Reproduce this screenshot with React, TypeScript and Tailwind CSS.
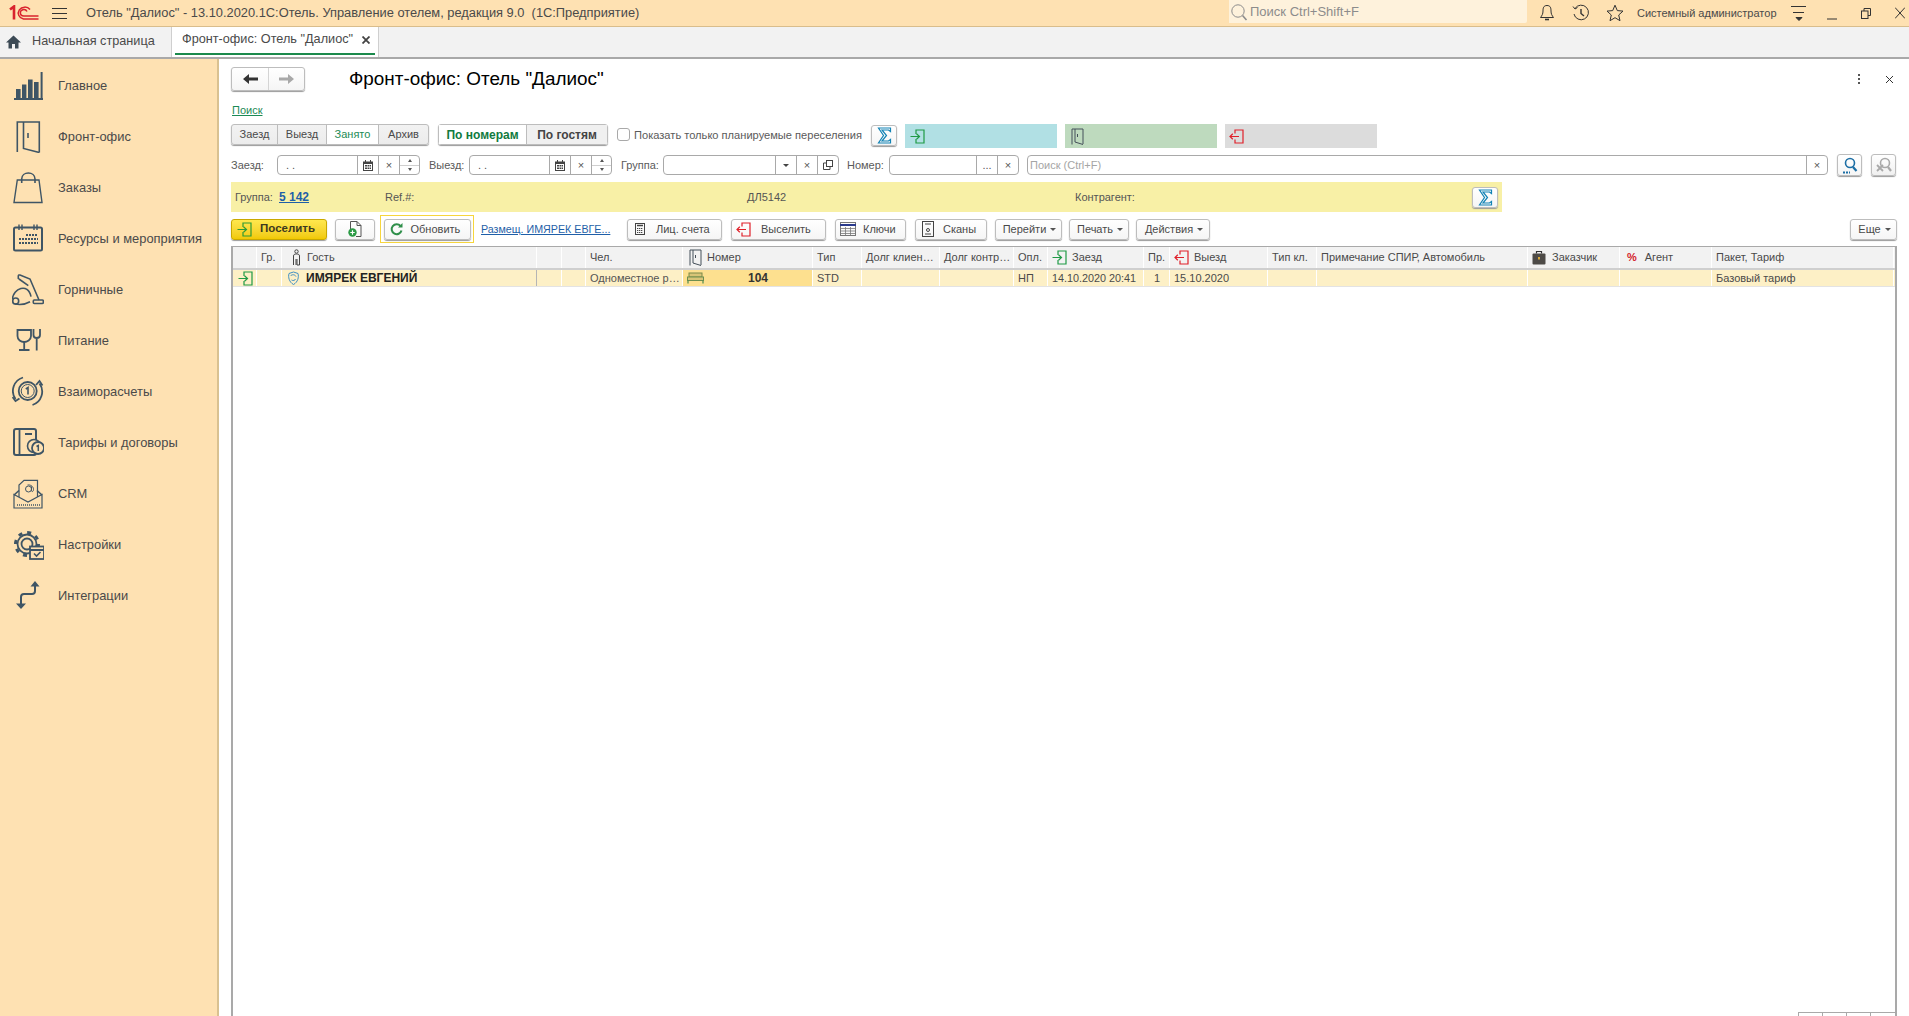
import type { ReactNode } from "react";

const Logo = () => (
  <svg width="30" height="16" viewBox="0 0 30 16" fill="none" stroke="#d9232e">
    <path d="M1 4.5 L5 1.5 V14.5" strokeWidth="2.6" />
    <path d="M21 4.5 A6.5 6 0 1 0 14.5 14 H29.5" strokeWidth="1.5" />
    <path d="M18 6.5 A3.5 3.2 0 1 0 15 11 H29.5" strokeWidth="1.5" />
  </svg>
);

const EnterIcon = ({ color = "#1f9a45" }: { color?: string }) => (
  <svg width="15" height="15" viewBox="0 0 15 15" fill="none" stroke={color} strokeWidth="1.2">
    <path d="M6 5 V1 H14 V14 H6 V10" />
    <path d="M0.5 7.5 H9.5 M6.5 4.8 L9.5 7.5 L6.5 10.2" />
  </svg>
);

const ExitIcon = () => (
  <svg width="15" height="15" viewBox="0 0 15 15" fill="none" stroke="#e0202a" strokeWidth="1.2">
    <path d="M6 4.5 V1 H14 V14 H6 V10.5" />
    <path d="M10 7.5 H1 M3.8 4.8 L1 7.5 L3.8 10.2" />
  </svg>
);

const DoorSmall = () => (
  <svg width="13" height="17" viewBox="0 0 13 17" fill="none" stroke="#45505a" strokeWidth="1">
    <path d="M1 16.5 V1 H12 V16" />
    <path d="M4 1 V14 L12 16.5" />
    <path d="M6.5 6 V9" />
  </svg>
);

const Sigma = () => (
  <svg width="15" height="17" viewBox="0 0 15 17" fill="none" stroke="#1283b5" strokeWidth="1.2">
    <path d="M1.5 1 H13.5 V4.5 L11.5 3 H5 L9.5 8.5 L5 14 H11.5 L13.5 12.5 V16 H1.5 L6.5 8.5 Z" />
  </svg>
);

const navIcons: ReactNode[] = [
  <>
    <g fill="#3f5565" stroke="none">
      <rect x="4" y="19" width="4.6" height="9" />
      <rect x="10" y="14.5" width="4.4" height="13.5" />
      <rect x="16" y="9.5" width="4.6" height="18.5" />
      <rect x="22" y="12" width="4.6" height="16" />
      <rect x="2" y="28" width="29" height="2" />
      <rect x="28.6" y="2" width="2" height="27" />
    </g>
  </>,
  <>
    <path d="M5.3 31 V1 H27.3 V31.5" />
    <path d="M11.5 1 V27.5 L27.3 31.5" />
    <path d="M16 12 V17" />
  </>,
  <>
    <path d="M5.3 8 H27 L30 30.5 H2 Z" strokeWidth="1.4" />
    <path d="M9.7 11 V7 C9.7 -1 23 -1 23 7 V11" />
  </>,
  <>
    <rect x="2" y="4.5" width="28" height="23" rx="1.5" strokeWidth="2" />
    <path d="M7 1.5 V7 M10 1.5 V7 M22 1.5 V7 M25 1.5 V7" strokeWidth="1.4" />
    <path d="M14 12 H26" strokeWidth="2.2" strokeDasharray="2 1" />
    <path d="M7 16 H26" strokeWidth="2.2" strokeDasharray="2 1" />
    <path d="M7 20 H26" strokeWidth="2.2" strokeDasharray="2 1" />
  </>,
  <>
    <path d="M7 5 L6.3 4.3 V2 C6.3 1 7.2 .8 8 1 L18 5 L27 26" />
    <path d="M7 5 L16.3 11.7" />
    <path d="M0.5 25 C1 15 16 8 19 22.7 M3 30 C8 31 14 30 18 27.7" />
    <circle cx="3.7" cy="27" r="3" />
    <rect x="21.3" y="26" width="10" height="3.5" rx="1" />
  </>,
  <>
    <path d="M5.5 5 H19 V11 C19 15 15 17 12.2 17 C9 17 5.5 15 5.5 11 Z" strokeWidth="1.8" />
    <path d="M12.2 17 V24.5 M7 25 H17.5" strokeWidth="1.8" />
    <path d="M21.5 4 V10 C21.5 12 23 13 24.7 13 C26.5 13 28 12 28 10 V4 M24.7 13 V25.5" strokeWidth="1.8" />
  </>,
  <>
    <circle cx="15.7" cy="15" r="9" strokeWidth="1.8" />
    <circle cx="15.7" cy="15" r="6.5" strokeWidth="1" />
    <path d="M13.8 13 L16 11.5 V18.5" strokeWidth="1.6" />
    <path d="M11 1.5 A14 14 0 0 0 3.5 23 M20.5 29 A14 14 0 0 0 27.5 7.5" strokeWidth="1.8" />
    <path d="M0.5 21 L3.5 25 L7.5 22.5 M24 9 L27.5 5 L30.5 9.5" strokeWidth="1.8" />
  </>,
  <>
    <rect x="2" y="2" width="22" height="26" rx="2" strokeWidth="2" />
    <path d="M7.5 2 V28 M13 7 H20" strokeWidth="1.8" />
    <circle cx="22" cy="19" r="6.5" fill="#fee1b2" strokeWidth="1.6" />
    <circle cx="26" cy="21" r="6" fill="#fee1b2" strokeWidth="1.8" />
    <path d="M24.5 19.5 L26.3 18.5 V24" strokeWidth="1.5" />
  </>,
  <>
    <path d="M2 17 L7 12.5 M30 17 L25 12.5" />
    <path d="M2 16.5 V30 H30 V16.5 L16 24 Z" strokeWidth="1.2" />
    <path d="M7 19 V7 L12 2.3 H25.5 V19" strokeWidth="1.2" />
    <path d="M5 27 H28" strokeDasharray="1 1" strokeWidth="1.3" />
    <circle cx="16.5" cy="11" r="3" strokeWidth="1" />
    <path d="M19.5 8.5 V12.5 C19.5 14 21.5 14 21.5 11.5 C21.5 8 18 6.5 15.5 7" strokeWidth="1" />
  </>,
  <>
    <circle cx="15" cy="15" r="5.5" strokeWidth="1.8" />
    <circle cx="15" cy="15" r="9.5" strokeWidth="1.8" />
    <circle cx="15" cy="15" r="11.5" strokeWidth="3" strokeDasharray="4 5" />
    <rect x="18" y="17.5" width="14" height="12.5" fill="#fee1b2" strokeWidth="1.8" />
    <path d="M18 21 H32" strokeWidth="2" />
    <path d="M22 24.5 L24.5 27 L28.5 23" strokeWidth="1.6" />
  </>,
  <>
    <path d="M23 5 V11 A3 3 0 0 1 20 14 H12 A3 3 0 0 0 9 17 V25" strokeWidth="2" />
    <path d="M23 1 L27.5 6.5 H18.5 Z M9 29 L4 23.5 H14 Z" fill="#3f5565" stroke="none" />
  </>,
];

const navLabels = [
  "Главное",
  "Фронт-офис",
  "Заказы",
  "Ресурсы и мероприятия",
  "Горничные",
  "Питание",
  "Взаиморасчеты",
  "Тарифы и договоры",
  "CRM",
  "Настройки",
  "Интеграции",
];

const TopBar = () => (
  <div className="flex h-[27px] shrink-0 items-center border-b border-[#d9bd8c] bg-[#fee1b2] text-[#4a4a4a]">
    <div className="ml-[9px] w-[30px]">
      <Logo />
    </div>
    <div className="ml-[13px] flex w-[15px] flex-col gap-[4px]">
      <div className="h-[1px] bg-[#333]" />
      <div className="h-[1px] bg-[#333]" />
      <div className="h-[1px] bg-[#333]" />
    </div>
    <div className="ml-[19px] whitespace-pre text-[12.85px]">
      Отель "Далиос" - 13.10.2020.1С:Отель. Управление отелем, редакция 9.0  (1С:Предприятие)
    </div>
    <div className="ml-auto flex h-[23px] w-[298px] items-center self-start rounded-br-[2px] bg-[#fef2dc] pl-[1px] text-[13px] text-[#8c8c8c]">
      <svg width="18" height="18" viewBox="0 0 18 18" fill="none" stroke="#8c8c8c" strokeWidth="1">
        <circle cx="8" cy="8" r="6.2" />
        <path d="M12.5 12.5 L16.5 17" strokeWidth="1.6" />
      </svg>
      <span className="ml-[2px]">Поиск Ctrl+Shift+F</span>
    </div>
    <svg className="ml-[12px]" width="16" height="18" viewBox="0 0 16 18" fill="none" stroke="#333" strokeWidth="1">
      <path d="M8 1.5 C4.5 1.5 4 4 4 7 C4 10 3 11.5 1.5 13.5 H14.5 C13 11.5 12 10 12 7 C12 4 11.5 1.5 8 1.5 Z" />
      <path d="M6 15.5 H10" strokeWidth="1.6" />
    </svg>
    <svg className="ml-[17px]" width="18" height="18" viewBox="0 0 18 18" fill="none" stroke="#333" strokeWidth="1">
      <path d="M3 4.5 A7.3 7.3 0 1 1 2 10" />
      <path d="M1 2.5 L3 5 L5.5 3.5" />
      <path d="M9 5 V9.5 L12 12" strokeWidth="1.4" />
    </svg>
    <svg className="ml-[16px]" width="18" height="18" viewBox="0 0 18 18" fill="none" stroke="#333" strokeWidth="1">
      <path d="M9 1.2 L11.3 6.6 L17 7.1 L12.7 11 L14 16.7 L9 13.7 L4 16.7 L5.3 11 L1 7.1 L6.7 6.6 Z" />
    </svg>
    <div className="ml-[13px] w-[143px] whitespace-nowrap text-[11px]">Системный администратор</div>
    <svg className="ml-[11px]" width="16" height="16" viewBox="0 0 16 16" fill="none" stroke="#333" strokeWidth="1">
      <path d="M0 1.5 H15 M2 7.5 H13" />
      <path d="M5 12.5 H11 L8 15.5 Z" fill="#333" />
    </svg>
    <svg className="ml-[20px]" width="10" height="14" viewBox="0 0 10 14" fill="none" stroke="#333" strokeWidth="1">
      <path d="M0 13 H10" />
    </svg>
    <svg className="ml-[24px]" width="10" height="11" viewBox="0 0 10 11" fill="none" stroke="#333" strokeWidth="1">
      <path d="M3 3 V0.5 H9.5 V7.5 H7" />
      <rect x="0.5" y="3" width="6.5" height="7.5" />
    </svg>
    <svg className="ml-[24px] mr-[4px]" width="10" height="12" viewBox="0 0 10 12" fill="none" stroke="#333" strokeWidth="1">
      <path d="M0 0.5 L10 11.5 M10 0.5 L0 11.5" />
    </svg>
  </div>
);

const TabBar = () => (
  <div className="flex h-[32px] shrink-0 border-b-2 border-[#a9a9a9] bg-[#f2f2f2] text-[12.7px] text-[#4a4a4a]">
    <div className="flex w-[172px] items-center border-r border-[#cfcfcf] pl-[6px]">
      <svg width="15" height="14" viewBox="0 0 15 14" fill="#3c4a55">
        <path d="M7.5 0.5 L15 7.5 H12.5 V13.5 H9 V9 H6 V13.5 H2.5 V7.5 H0 Z" />
      </svg>
      <span className="ml-[11px]">Начальная страница</span>
    </div>
    <div className="flex w-[207px] flex-col border-r border-[#cfcfcf] bg-white">
      <div className="flex flex-1 items-center pl-[10px]">
        <span className="w-[180px] whitespace-nowrap">Фронт-офис: Отель "Далиос"</span>
        <svg width="8" height="8" viewBox="0 0 8 8" stroke="#444" strokeWidth="1.8">
          <path d="M0.5 0.5 L7.5 7.5 M7.5 0.5 L0.5 7.5" />
        </svg>
      </div>
      <div className="mx-[3px] mb-[2px] h-[2px] bg-[#1b8a4c]" />
    </div>
  </div>
);

const Sidebar = () => (
  <aside className="flex w-[219px] shrink-0 flex-col border-r-2 border-[#d9c191] bg-[#fee1b2] pt-[1px] text-[12.9px] text-[#4a4a4a]">
    {navLabels.map((label, i) => (
      <div key={label} className="flex h-[51px] shrink-0 items-center pl-[12px]">
        <svg width="32" height="32" viewBox="0 0 32 32" fill="none" stroke="#3f5565" strokeWidth="1.6" className="shrink-0">
          {navIcons[i]}
        </svg>
        <span className="ml-[14px] whitespace-nowrap">{label}</span>
      </div>
    ))}
  </aside>
);

const btn =
  "flex items-center justify-center rounded-[3px] border border-[#bdbdbd] bg-linear-to-b from-white to-[#f5f5f5] shadow-[0_1px_1px_#9a9a9a] text-[11px] text-[#4a4a4a]";

const SigmaButton = () => (
  <div className={`${btn} h-[21px] w-[26px]`}>
    <Sigma />
  </div>
);

const Seg = ({ w, className = "", children }: { w: string; className?: string; children?: ReactNode }) => (
  <div className={`flex h-full items-center justify-center border-l border-[#a9a9a9] text-[#555] ${w} ${className}`}>
    {children}
  </div>
);

const XGlyph = () => <span className="text-[11px] leading-none">×</span>;

const CalIcon = () => (
  <svg width="10" height="11" viewBox="0 0 10 11" fill="#444">
    <path d="M0 1.5 H2 V0 H3 V1.5 H7 V0 H8 V1.5 H10 V11 H0 Z M1 4 V10 H9 V4 Z" />
    <path d="M2 5 H4 V6.5 H2 Z M4.5 5 H6 V6.5 H4.5 Z M6.5 5 H8 V6.5 H6.5 Z M2 7.5 H4 V9 H2 Z M4.5 7.5 H6 V9 H4.5 Z M6.5 7.5 H8 V9 H6.5 Z" />
  </svg>
);

const Spin = () => (
  <div className="flex h-full flex-col">
    <div className="flex flex-1 items-center justify-center border-b border-[#cfcfcf]">
      <div className="h-0 w-0 border-x-[2px] border-b-[3px] border-x-transparent border-b-[#555]" />
    </div>
    <div className="flex flex-1 items-center justify-center">
      <div className="h-0 w-0 border-x-[2px] border-t-[3px] border-x-transparent border-t-[#555]" />
    </div>
  </div>
);

const fieldCls = "flex h-[20px] items-center overflow-hidden rounded-[4px] border border-[#a9a9a9] bg-white";
const labelCls = "text-[11px] text-[#5a5a5a] whitespace-nowrap";

const DateField = () => (
  <div className={`${fieldCls} w-[143px]`}>
    <div className="flex-1 pl-[8px] text-[11px] text-[#555]">. .</div>
    <Seg w="w-[21px]">
      <CalIcon />
    </Seg>
    <Seg w="w-[21px]">
      <XGlyph />
    </Seg>
    <Seg w="w-[20px] !block">
      <Spin />
    </Seg>
  </div>
);

const Caret = () => <div className="ml-[4px] h-0 w-0 border-x-[3px] border-t-[3px] border-x-transparent border-t-[#555]" />;

const MenuBtn = ({ w, label, className = "" }: { w: string; label: string; className?: string }) => (
  <div className={`${btn} h-[21px] ${w} pl-[2px] ${className}`}>
    {label}
    <Caret />
  </div>
);

const columns = "grid grid-cols-[24px_25px_255px_25px_24px_97px_130px_49px_78px_74px_34px_96px_26px_98px_49px_211px_92px_92px_182px]";

const PersonIcon = () => (
  <svg width="9" height="17" viewBox="0 0 9 17" fill="none" stroke="#444" strokeWidth="1">
    <circle cx="4.5" cy="2.5" r="1.7" />
    <path d="M1.5 16 V7 C1.5 5.5 2.5 5 4.5 5 C6.5 5 7.5 5.5 7.5 7 V16 H5 V10 M4 10 V16" />
  </svg>
);

const CaseIcon = () => (
  <svg width="14" height="15" viewBox="0 0 14 15">
    <path d="M4.5 3.5 V1.5 H9.5 V3.5" fill="none" stroke="#333" strokeWidth="1.2" />
    <rect x="0.5" y="3.5" width="13" height="11" rx="1" fill="#4d4a46" />
    <rect x="6" y="7" width="2" height="2.5" fill="#d9a93a" />
  </svg>
);

const Head = ({ children, className = "" }: { children?: ReactNode; className?: string }) => (
  <div className={`flex h-[21px] items-center gap-[5px] overflow-hidden whitespace-nowrap border-r border-white pb-[1px] pl-[4px] ${className}`}>
    {children}
  </div>
);

const headers: ReactNode[] = [
  "",
  "Гр.",
  <>
    <span className="ml-[6px] flex">
      <PersonIcon />
    </span>
    <span className="ml-[1px]">Гость</span>
  </>,
  "",
  "",
  "Чел.",
  <>
    <span className="ml-[2px] flex">
      <DoorSmall />
    </span>
    <span>Номер</span>
  </>,
  "Тип",
  "Долг клиен…",
  "Долг контр…",
  "Опл.",
  <>
    <EnterIcon />
    <span>Заезд</span>
  </>,
  "Пр.",
  <>
    <ExitIcon />
    <span>Выезд</span>
  </>,
  "Тип кл.",
  "Примечание СПИР, Автомобиль",
  <>
    <CaseIcon />
    <span className="ml-[1px]">Заказчик</span>
  </>,
  <>
    <span className="ml-[3px] font-bold text-[#d4232a]">%</span>
    <span className="ml-[3px]">Агент</span>
  </>,
  "Пакет, Тариф",
];

const GuestIcon = () => (
  <svg width="13" height="14" viewBox="0 0 13 14" fill="none" stroke="#3f8fc4" strokeWidth="1">
    <path d="M6.5 1 L11 2.5 C12 6 11 11 6.5 13.5 C2 11 1 6 2 2.5 Z" />
    <path d="M3.5 5 C5 3 8 3.5 9 5.5 M4.5 9 C6 10 8 9.5 8.5 8" />
  </svg>
);

const BedIcon = () => (
  <svg width="17" height="12" viewBox="0 0 17 12">
    <rect x="2" y="1" width="13" height="4" fill="#d8c477" stroke="#7d8a4a" strokeWidth="1" />
    <rect x="0.5" y="5" width="16" height="3.5" fill="#d8c477" stroke="#6e8f4f" strokeWidth="1" />
    <path d="M1 8.5 V11.5 M16 8.5 V11.5" stroke="#4f8a4f" strokeWidth="1.2" />
  </svg>
);

const Cell = ({ children, className = "" }: { children?: ReactNode; className?: string }) => (
  <div className={`flex h-[16px] items-center overflow-hidden whitespace-nowrap border-r border-white pl-[4px] ${className}`}>
    {children}
  </div>
);

const App = () => (
  <div className="flex h-[1016px] w-[1909px] flex-col overflow-hidden bg-white text-[#4a4a4a] [font-family:'Liberation_Sans',Arial,sans-serif]">
    <TopBar />
    <TabBar />
    <div className="flex min-h-0 flex-1">
      <Sidebar />
      <main className="flex min-w-0 flex-1 flex-col px-[12px]">
        <div className="mt-[8px] flex h-[24px] shrink-0 items-center">
          <div className={`${btn} h-[24px] w-[74px] !justify-start`}>
            <div className="flex h-full w-[37px] items-center justify-center border-r border-[#d4d4d4]">
              <svg width="15" height="10" viewBox="0 0 15 10" fill="#333">
                <path d="M0 5 L6 0 V3.4 H15 V6.6 H6 V10 Z" />
              </svg>
            </div>
            <div className="flex flex-1 items-center justify-center">
              <svg width="15" height="10" viewBox="0 0 15 10" fill="#a8a8a8">
                <path d="M15 5 L9 0 V3.4 H0 V6.6 H9 V10 Z" />
              </svg>
            </div>
          </div>
          <div className="ml-[44px] whitespace-nowrap pt-[1px] text-[18.9px] text-black">Фронт-офис: Отель "Далиос"</div>
          <div className="ml-auto flex w-[28px] flex-col gap-[2px] pl-[1px]">
            <div className="h-[2px] w-[2px] bg-[#555]" />
            <div className="h-[2px] w-[2px] bg-[#555]" />
            <div className="h-[2px] w-[2px] bg-[#555]" />
          </div>
          <svg className="mr-[3px]" width="9" height="9" viewBox="0 0 9 9" stroke="#333" strokeWidth="1">
            <path d="M1 1 L8 8 M8 1 L1 8" />
          </svg>
        </div>

        <div className="mt-[12px] h-[14px] shrink-0 pl-[1px] text-[11px] leading-[14px] text-[#1c8a55] underline">Поиск</div>

        <div className="mt-[7px] flex h-[24px] shrink-0 items-start">
          <div className={`${btn} h-[21px] w-[198px] !justify-start !from-[#f2f2f2] !to-[#ececec]`}>
            <div className="flex h-full w-[46px] items-center justify-center border-r border-[#bdbdbd]">Заезд</div>
            <div className="flex h-full w-[49px] items-center justify-center border-r border-[#bdbdbd]">Выезд</div>
            <div className="flex h-full w-[52px] items-center justify-center border-r border-[#bdbdbd] bg-white text-[#1c8a55]">Занято</div>
            <div className="flex h-full flex-1 items-center justify-center">Архив</div>
          </div>
          <div className={`${btn} ml-[9px] h-[21px] w-[170px] !justify-start !text-[12px] font-bold`}>
            <div className="flex h-full w-[88px] items-center justify-center border-r border-[#bdbdbd] bg-white text-[#127a3e]">По номерам</div>
            <div className="flex h-full flex-1 items-center justify-center bg-[#f0f0f0] text-[#444]">По гостям</div>
          </div>
          <div className="ml-[9px] mt-[4px] h-[13px] w-[13px] shrink-0 rounded-[3px] border border-[#a9a9a9] bg-white" />
          <div className={`${labelCls} ml-[4px] mt-[3px] w-[237px] !text-[11.1px]`}>Показать только планируемые переселения</div>
          <div className="mt-[1px]">
            <SigmaButton />
          </div>
          <div className="ml-[8px] flex h-[24px] w-[152px] items-center bg-[#b1e0e4] pl-[5px]">
            <EnterIcon />
          </div>
          <div className="ml-[8px] flex h-[24px] w-[152px] items-center bg-[#bedabe] pl-[6px]">
            <DoorSmall />
          </div>
          <div className="ml-[8px] flex h-[24px] w-[152px] items-center bg-[#dcdcdc] pl-[4px]">
            <ExitIcon />
          </div>
        </div>

        <div className="mt-[6px] flex h-[22px] shrink-0 items-center">
          <div className={`${labelCls} w-[46px]`}>Заезд:</div>
          <DateField />
          <div className={`${labelCls} ml-[9px] w-[40px]`}>Выезд:</div>
          <DateField />
          <div className={`${labelCls} ml-[9px] w-[42px]`}>Группа:</div>
          <div className={`${fieldCls} w-[176px]`}>
            <div className="flex-1" />
            <Seg w="w-[21px]">
              <div className="h-0 w-0 border-x-[3px] border-t-[3px] border-x-transparent border-t-[#444]" />
            </Seg>
            <Seg w="w-[21px]">
              <XGlyph />
            </Seg>
            <Seg w="w-[21px]">
              <svg width="10" height="10" viewBox="0 0 10 10" fill="none" stroke="#444" strokeWidth="1">
                <rect x="3.5" y="0.5" width="6" height="6" />
                <path d="M3.5 3 H0.5 V9.5 H7 V6.5" />
              </svg>
            </Seg>
          </div>
          <div className={`${labelCls} ml-[8px] w-[42px]`}>Номер:</div>
          <div className={`${fieldCls} w-[130px]`}>
            <div className="flex-1" />
            <Seg w="w-[21px]">
              <span className="text-[11px] leading-none">...</span>
            </Seg>
            <Seg w="w-[21px]">
              <XGlyph />
            </Seg>
          </div>
          <div className={`${fieldCls} ml-[8px] w-[801px]`}>
            <div className="flex-1 pl-[2px] text-[11px] text-[#a5a5a5]">Поиск (Ctrl+F)</div>
            <Seg w="w-[21px]">
              <XGlyph />
            </Seg>
          </div>
          <div className={`${btn} ml-[9px] h-[22px] w-[25px]`}>
            <svg width="16" height="17" viewBox="0 0 16 17" fill="none" stroke="#1d6fa5" strokeWidth="1.6">
              <circle cx="8" cy="6" r="4.5" />
              <path d="M11 10 L14.5 14" strokeWidth="2.2" />
              <path d="M1 15.5 H8" strokeWidth="1.8" strokeDasharray="2 1" />
            </svg>
          </div>
          <div className={`${btn} ml-[9px] h-[22px] w-[25px] !to-[#f0f0f0]`}>
            <svg width="16" height="17" viewBox="0 0 16 17" fill="none" stroke="#a9a9a9" strokeWidth="1.6">
              <circle cx="9" cy="6" r="4.5" />
              <path d="M12 10 L15 14" strokeWidth="2.2" />
              <path d="M1 8 L7 14 M7 8 L1 14" strokeWidth="1.8" />
            </svg>
          </div>
        </div>

        <div className="mt-[6px] flex h-[30px] w-[1271px] shrink-0 items-center bg-[#f8f0a6] text-[11px] text-[#555]">
          <span className="ml-[4px] w-[44px]">Группа:</span>
          <span className="w-[106px] text-[12px] font-bold text-[#1f5fa8] underline">5 142</span>
          <span className="w-[362px]">Ref.#:</span>
          <span className="w-[328px]">ДЛ5142</span>
          <span className="flex-1">Контрагент:</span>
          <div className="mr-[4px]">
            <SigmaButton />
          </div>
        </div>

        <div className="mt-[3px] flex h-[28px] shrink-0 items-center">
          <div className="flex h-[21px] w-[96px] items-center rounded-[3px] border border-[#c9a800] bg-linear-to-b from-[#ffe84d] to-[#f1c900] pl-[5px] text-[11.5px] font-bold text-[#3d3a20] shadow-[0_1px_1px_#9a9a9a]">
            <EnterIcon color="#2f9a35" />
            <span className="ml-[8px]">Поселить</span>
          </div>
          <div className={`${btn} ml-[8px] h-[21px] w-[40px]`}>
            <svg width="14" height="16" viewBox="0 0 14 16" fill="none">
              <path d="M2.5 9 V0.5 H9 L13 4.5 V15.5 H8" stroke="#555" strokeWidth="1" />
              <path d="M9 0.5 V4.5 H13" stroke="#555" strokeWidth="1" />
              <circle cx="4.5" cy="11.5" r="4.2" fill="#2b9a45" />
              <path d="M2.3 11.5 H6.7 M4.5 9.3 V13.7" stroke="#fff" strokeWidth="1.2" />
            </svg>
          </div>
          <div className="ml-[5px] flex h-[28px] w-[94px] items-center justify-center border border-[#f6d53d]">
            <div className={`${btn} h-[21px] w-[87px] !justify-start gap-[8px] pl-[5px]`}>
              <svg width="13" height="13" viewBox="0 0 13 13" fill="none" stroke="#2f8f4a" strokeWidth="2">
                <path d="M10.5 3 A5 5 0 1 0 11.5 7.5" />
                <path d="M8 4.5 H12.5 V0 Z" strokeWidth="0" fill="#2f8f4a" />
              </svg>
              Обновить
            </div>
          </div>
          <div className="ml-[7px] w-[130px] whitespace-nowrap text-[10.7px] text-[#1f5fa8] underline">Размещ. ИМЯРЕК ЕВГЕ...</div>
          <div className={`${btn} ml-[16px] h-[21px] w-[95px] !justify-start gap-[11px] pl-[7px]`}>
            <svg width="10" height="12" viewBox="0 0 10 12" fill="none" stroke="#444" strokeWidth="1">
              <rect x="0.5" y="0.5" width="9" height="11" />
              <path d="M2 2.5 H8" strokeWidth="1.5" />
              <path d="M2 5.5 H8 M2 7.5 H8 M2 9.5 H8" strokeDasharray="1.2 .7" strokeWidth="1.2" />
            </svg>
            Лиц. счета
          </div>
          <div className={`${btn} ml-[9px] h-[21px] w-[95px] !justify-start gap-[10px] pl-[4px]`}>
            <ExitIcon />
            Выселить
          </div>
          <div className={`${btn} ml-[9px] h-[21px] w-[71px] !justify-start gap-[7px] pl-[4px]`}>
            <svg width="16" height="14" viewBox="0 0 16 14" fill="none" stroke="#777" strokeWidth="1">
              <rect x="0.5" y="0.5" width="15" height="13" />
              <path d="M0 3 H16" stroke="#2a3a8c" strokeWidth="2" />
              <path d="M1 6.5 H15 M1 9 H15 M1 11.5 H15 M5.5 5 V13 M10.5 5 V13" strokeWidth=".8" />
            </svg>
            Ключи
          </div>
          <div className={`${btn} ml-[9px] h-[21px] w-[72px] !justify-start gap-[9px] pl-[6px]`}>
            <svg width="12" height="16" viewBox="0 0 12 16" fill="none" stroke="#444" strokeWidth="1">
              <rect x="0.5" y="0.5" width="11" height="15" />
              <path d="M3 3 H9" />
              <circle cx="6" cy="9" r="1.5" />
              <path d="M3 13 H9" />
            </svg>
            Сканы
          </div>
          <MenuBtn className="ml-[8px]" w="w-[67px]" label="Перейти" />
          <MenuBtn className="ml-[7px]" w="w-[60px]" label="Печать" />
          <MenuBtn className="ml-[7px]" w="w-[74px]" label="Действия" />
          <MenuBtn className="ml-auto" w="w-[47px]" label="Еще" />
        </div>

        <div className="mt-[3px] flex min-h-0 flex-1 flex-col border-x-2 border-t border-[#a9a9a9] text-[11px] text-[#4a4a4a]">
          <div className={`${columns} w-full shrink-0 border-b-2 border-[#cfcfcf] bg-[#f2f2f2]`}>
            {headers.map((h, i) => (
              <Head key={i}>{h}</Head>
            ))}
          </div>
          <div className={`${columns} w-full shrink-0 border-b border-[#e3e3e3] bg-[#fdf0c6]`}>
            <Cell className="!pl-[5px]">
              <EnterIcon />
            </Cell>
            <Cell />
            <Cell className="!border-[#b5b5b5] gap-[6px] font-bold !pl-[5px] text-[12px] text-[#222]">
              <GuestIcon />
              ИМЯРЕК ЕВГЕНИЙ
            </Cell>
            <Cell />
            <Cell />
            <Cell className="text-[#555]">Одноместное р…</Cell>
            <Cell className="bg-[#fde08f] !pl-[4px] font-bold text-[12px] text-[#333]">
              <BedIcon />
              <span className="ml-[44px]">104</span>
            </Cell>
            <Cell>STD</Cell>
            <Cell />
            <Cell />
            <Cell>НП</Cell>
            <Cell className="text-[10.8px]">14.10.2020 20:41</Cell>
            <Cell className="!pl-[10px]">1</Cell>
            <Cell>15.10.2020</Cell>
            <Cell />
            <Cell />
            <Cell />
            <Cell />
            <Cell>Базовый тариф</Cell>
          </div>
          <div className="mt-auto flex h-[4px] shrink-0 justify-end">
            <div className="mb-[-20px] flex h-[24px] border-l border-t border-[#a9a9a9]">
              <div className="w-[24px] border-r border-[#a9a9a9]" />
              <div className="w-[24px] border-r border-[#a9a9a9]" />
              <div className="w-[24px] border-r border-[#a9a9a9]" />
              <div className="w-[24px]" />
            </div>
          </div>
        </div>
      </main>
    </div>
  </div>
);

export default App;
